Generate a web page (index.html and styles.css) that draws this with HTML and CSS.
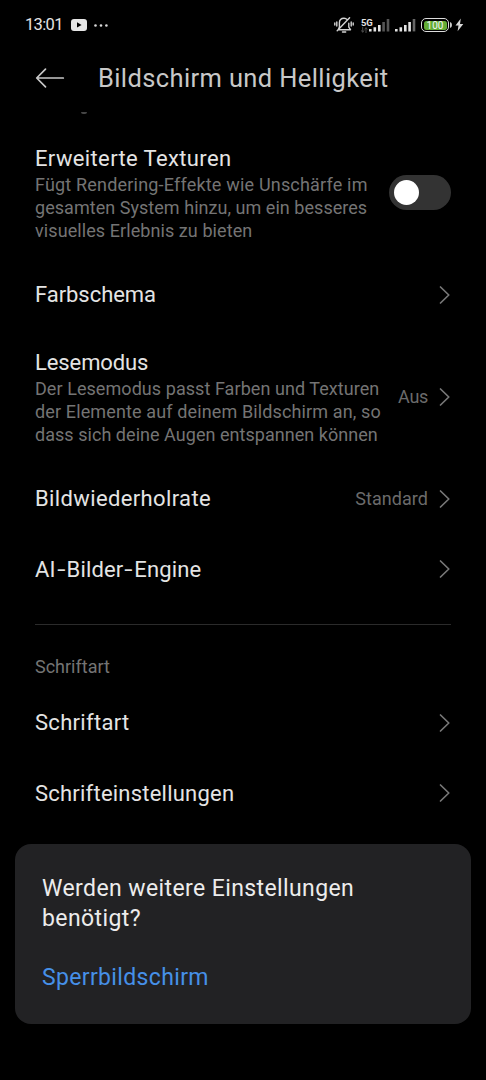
FILE: index.html
```html
<!DOCTYPE html>
<html lang="de">
<head>
<meta charset="utf-8">
<title>Bildschirm und Helligkeit</title>
<link rel="stylesheet" href="styles.css">
</head>
<body>
<div class="status">
  <span class="clock">13:01</span>
  <svg class="yt" width="16" height="12" viewBox="0 0 16 12"><rect width="16" height="12" rx="3" fill="#e6e6e6"/><path d="M6 3.3v5.2l4.6-2.6z" fill="#000"/></svg>
  <svg class="dots" width="14" height="3" viewBox="0 0 14 3" fill="#d8d8d8"><circle cx="1.5" cy="1.5" r="1.3"/><circle cx="7" cy="1.5" r="1.3"/><circle cx="12.4" cy="1.5" r="1.3"/></svg>
  <svg class="bell" width="20" height="18" viewBox="0 0 20 18" fill="none" stroke="#d4d4d4" stroke-width="1.4" stroke-linecap="round" stroke-linejoin="round"><path d="M4.2 13.7h12.3l-1.7-2.5V7.3M13.2 3.6C12.2 2.5 11.3 2.2 10 2.2 7.2 2.2 5.4 4.2 5.4 7v4l-1.2 2.7M8.5 16h3.2M15.6 1.8 3.2 14.8M2.8 6v4M.8 7v2M17.2 6v4M19.2 7v2"/></svg>
  <div class="net"><span class="gen">5G</span><svg width="7" height="6" viewBox="0 0 7 6" fill="none" stroke="#4c4c4c" stroke-width="1"><path d="M1.7 0v5M.4 3.4l1.3 2 1.3-2M5 6V1M3.7 2.4 5 .6l1.3 1.8"/></svg></div>
  <svg class="bars1" width="21" height="14" viewBox="0 0 21 14"><path fill="#e4e4e4" d="M0 11h2.6v2.4H0zM4.5 9.2h2.6v4.2H4.5zM9 7h2.6v6.4H9z"/><path fill="#555" d="M13.3 4h2.6v9.4h-2.6zM17.7 1h2.6v12.4h-2.6z"/></svg>
  <svg class="bars2" width="21" height="14" viewBox="0 0 21 14"><path fill="#e4e4e4" d="M0 11h2.6v2.4H0zM4.5 9.2h2.6v4.2H4.5zM9 7h2.6v6.4H9zM13.3 4h2.6v9.4h-2.6z"/><path fill="#666" d="M17.7 1h2.6v12.4h-2.6z"/></svg>
  <div class="battery"><span class="level">100</span></div>
  <svg class="nub" width="3" height="6" viewBox="0 0 3 6"><path d="M0 0q2 .6 2 3t-2 3z" fill="#ccc"/></svg>
  <svg class="bolt" width="9" height="14" viewBox="0 0 9 14"><path d="M5.8.5.5 7.5h3L2.6 13.3 8.3 5.9H5z" fill="#d8d8d8"/></svg>
</div>
<header class="header">
  <svg width="30" height="22" viewBox="0 0 30 22" fill="none" stroke="#c8c8c8" stroke-width="1.7" stroke-linecap="round" stroke-linejoin="round"><path d="M28.3 11H2M10.5 2.2 1.7 11l8.800 8.800"/></svg>
  <h1 class="title">Bildschirm und Helligkeit</h1>
  <i class="descender"></i>
</header>
<main class="list">
  <div class="row tall">
    <div class="text"><div class="name">Erweiterte Texturen</div>
      <div class="desc"><span class="d1">Fügt Rendering-Effekte wie Unschärfe im</span><span class="d2">gesamten System hinzu, um ein besseres</span><span class="d3">visuelles Erlebnis zu bieten</span></div></div>
    <div class="toggle"><div class="knob"></div></div>
  </div>
  <div class="row"><div class="name n-color">Farbschema</div><svg class="chev" width="12" height="20" viewBox="0 0 12 20"><path d="M1.500 2 9.800 10l-8.300 8"/></svg></div>
  <div class="row tall">
    <div class="text"><div class="name n-read">Lesemodus</div>
      <div class="desc"><span class="d4">Der Lesemodus passt Farben und Texturen</span><span class="d5">der Elemente auf deinem Bildschirm an, so</span><span class="d6">dass sich deine Augen entspannen können</span></div></div>
    <span class="value off">Aus</span><svg class="chev" width="12" height="20" viewBox="0 0 12 20"><path d="M1.500 2 9.800 10l-8.300 8"/></svg>
  </div>
  <div class="row"><div class="name">Bildwiederholrate</div><span class="value">Standard</span><svg class="chev" width="12" height="20" viewBox="0 0 12 20"><path d="M1.500 2 9.800 10l-8.300 8"/></svg></div>
  <div class="row"><div class="name n-ai">AI<span class="hy">-</span>Bilder<span class="hy">-</span>Engine</div><svg class="chev" width="12" height="20" viewBox="0 0 12 20"><path d="M1.500 2 9.800 10l-8.300 8"/></svg></div>
  <hr class="rule">
  <h2 class="section">Schriftart</h2>
  <div class="row"><div class="name n-font">Schriftart</div><svg class="chev" width="12" height="20" viewBox="0 0 12 20"><path d="M1.500 2 9.800 10l-8.300 8"/></svg></div>
  <div class="row"><div class="name n-fontset">Schrifteinstellungen</div><svg class="chev" width="12" height="20" viewBox="0 0 12 20"><path d="M1.500 2 9.800 10l-8.300 8"/></svg></div>
</main>
<section class="card">
  <p class="ask">Werden weitere Einstellungen benötigt?</p>
  <a class="link">Sperrbildschirm</a>
</section>
</body>
</html>
```

FILE: styles.css
```css
* { box-sizing: border-box; }
html, body { margin: 0; background: #000; }
body { width: 486px; height: 1080px; overflow: hidden; font-family: Roboto, "Noto Sans", sans-serif; color: #e4e4e4; }
svg { display: block; flex: none; }
.status { height: 50px; padding-left: 25px; display: flex; align-items: center; }
.clock { width: 46px; font-size: 16.5px; line-height: 20px; letter-spacing: -.65px; white-space: nowrap; }
.dots { margin-left: 7px; }
.bell { margin-left: 226px; }
.net { width: 14px; height: 15px; margin-left: 7px; }
.gen { display: block; font-size: 9.5px; font-weight: 700; line-height: 9px; height: 9px; letter-spacing: -.2px; }
.bars1 { margin-left: -6px; }
.bars2 { margin-left: 5px; }
.battery { width: 28px; height: 14px; margin-left: 5px; border: 1.5px solid #ddd; border-radius: 5px; padding: 1.5px; }
.level { display: block; height: 100%; border-radius: 2.5px; background: #63ad35; color: #f4f4f4; font-size: 10px; line-height: 9.5px; font-weight: 400; text-align: center; }
.nub { margin-left: 1px; }
.bolt { margin-left: 2px; }
.header { position: relative; height: 76px; padding: 0 0 20px 35px; display: flex; align-items: center; gap: 33px; }
.title { margin: 0; font-size: 25.5px; font-weight: 400; letter-spacing: .38px; color: #c8c8c8; white-space: nowrap; }
.descender { position: absolute; left: 81px; top: 62px; width: 6px; height: 2px; border-radius: 0 0 3px 3px; background: #454545; }
.list { padding: 0 35px; }
.row { height: 70.5px; display: flex; align-items: center; }
.row.tall { height: 133.5px; }
.text { width: 354px; flex: none; padding-top: 1px; }
.row > .name { flex: 1; padding-top: 1px; }
.name { font-size: 22px; line-height: 28px; letter-spacing: .37px; white-space: nowrap; }
.n-color { letter-spacing: -.05px; }
.n-read { letter-spacing: -.1px; }
.n-ai { letter-spacing: .13px; }
.n-font { letter-spacing: .3px; }
.n-fontset { letter-spacing: .22px; }
.hy { display: inline-block; transform: scaleX(1.35); width: 11px; text-align: center; }
.desc { display: flex; flex-direction: column; font-size: 18px; line-height: 23px; color: #747474; white-space: nowrap; }
.d1 { letter-spacing: .19px; }
.d2 { letter-spacing: .04px; }
.d3 { letter-spacing: .08px; }
.d4 { letter-spacing: .06px; }
.d5 { letter-spacing: .13px; }
.d6 { letter-spacing: .04px; }
.toggle { width: 62px; height: 35px; border-radius: 18px; background: #333; padding: 5px; }
.knob { width: 25px; height: 25px; border-radius: 50%; background: #fff; }
.value { font-size: 18px; letter-spacing: .05px; color: #6b6b6b; margin-right: 11px; }
.tall .value { margin-left: auto; }
.value.off { letter-spacing: -.3px; }
.chev { fill: none; stroke: #777; stroke-width: 1.7; stroke-linecap: round; stroke-linejoin: round; }
.rule { height: 1px; margin: 19px 0 0; border: 0; background: #2b2b2b; }
.section { margin: 0; height: 63px; padding-top: 30px; font-size: 18px; line-height: 23px; font-weight: 400; letter-spacing: 0; color: #747474; }
.card { margin: 15px 15px 0; height: 180px; border-radius: 16px; background: #222224; padding: 30px 27px; }
.ask { margin: 0; width: 330px; font-size: 23px; line-height: 30.5px; letter-spacing: .4px; color: #ececec; }
.link { display: block; margin-top: 27px; font-size: 23px; line-height: 31px; letter-spacing: .35px; color: #4690e8; }
```
